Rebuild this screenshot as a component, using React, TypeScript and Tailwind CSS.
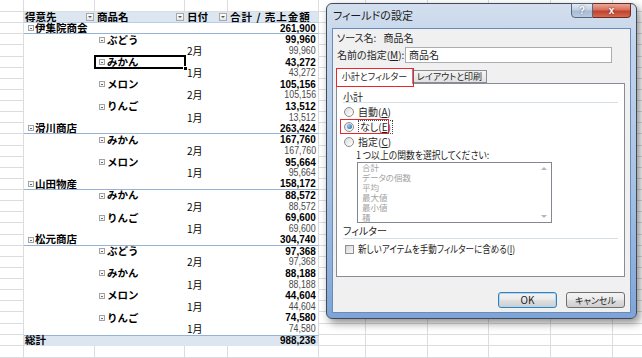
import React from "react";

type Kind = "c" | "p" | "d";
type R = { t: Kind; label: string; v: string; sel?: boolean };

const data: R[] = [
  { t: "c", label: "伊集院商会", v: "261,900" },
  { t: "p", label: "ぶどう", v: "99,960" },
  { t: "d", label: "2月", v: "99,960" },
  { t: "p", label: "みかん", v: "43,272", sel: true },
  { t: "d", label: "1月", v: "43,272" },
  { t: "p", label: "メロン", v: "105,156" },
  { t: "d", label: "2月", v: "105,156" },
  { t: "p", label: "りんご", v: "13,512" },
  { t: "d", label: "1月", v: "13,512" },
  { t: "c", label: "滑川商店", v: "263,424" },
  { t: "p", label: "みかん", v: "167,760" },
  { t: "d", label: "2月", v: "167,760" },
  { t: "p", label: "メロン", v: "95,664" },
  { t: "d", label: "1月", v: "95,664" },
  { t: "c", label: "山田物産", v: "158,172" },
  { t: "p", label: "みかん", v: "88,572" },
  { t: "d", label: "2月", v: "88,572" },
  { t: "p", label: "りんご", v: "69,600" },
  { t: "d", label: "1月", v: "69,600" },
  { t: "c", label: "松元商店", v: "304,740" },
  { t: "p", label: "ぶどう", v: "97,368" },
  { t: "d", label: "2月", v: "97,368" },
  { t: "p", label: "みかん", v: "88,188" },
  { t: "d", label: "1月", v: "88,188" },
  { t: "p", label: "メロン", v: "44,604" },
  { t: "d", label: "1月", v: "44,604" },
  { t: "p", label: "りんご", v: "74,580" },
  { t: "d", label: "1月", v: "74,580" },
];

const gridCell = "shrink-0 h-full border-r border-b border-[#dadcdd]";
const jp = "font-['Noto_Sans_CJK_JP',sans-serif]";
const num = "font-['Liberation_Sans',sans-serif]";

function Rest() {
  return (
    <>
      <div className={`${gridCell} w-[47px]`} />
      <div className={`${gridCell} w-[62px]`} />
      <div className={`${gridCell} w-[61px]`} />
      <div className={`${gridCell} w-[62px]`} />
      <div className={`${gridCell} w-[62px]`} />
      <div className={`${gridCell} w-[62px]`} />
    </>
  );
}

function GridRow({ h }: { h: string }) {
  return (
    <div className={`flex shrink-0 ${h}`}>
      <div className={`${gridCell} w-[24px]`} />
      <div className={`${gridCell} w-[71px]`} />
      <div className={`${gridCell} w-[90px]`} />
      <div className={`${gridCell} w-[43px]`} />
      <div className={`${gridCell} w-[91px]`} />
      <Rest />
    </div>
  );
}

function Minus() {
  return (
    <span className="relative inline-block shrink-0 w-[6px] h-[6px] border border-[#a3a3a3] bg-[#f7f7f7]">
      <span className="absolute left-[1px] right-[1px] top-[2px] h-px bg-[#6b6b6b]" />
    </span>
  );
}

function Drop() {
  return (
    <span className="relative inline-flex shrink-0 items-center justify-center w-[8px] h-[8px] border border-[#a9a9a9] bg-[linear-gradient(#ffffff,#e6e6e6)]">
      <span className="w-0 h-0 border-l-[2px] border-r-[2px] border-t-[2px] border-l-transparent border-r-transparent border-t-[#555]" />
    </span>
  );
}

function BoldNum({ v }: { v: string }) {
  return (
    <span className={`${num} inline-block origin-right scale-x-[0.9] text-[11px] font-bold leading-none text-black`}>
      {v}
    </span>
  );
}

function NormNum({ v }: { v: string }) {
  return (
    <span className={`${num} inline-block origin-right scale-x-[0.88] text-[10px] leading-none text-[#4a4a4a]`}>
      {v}
    </span>
  );
}

function PivotRow({ r }: { r: R }) {
  const pivotBorder = r.t === "c" ? "border-b border-b-[#95b3d7]" : "";
  return (
    <div className="flex shrink-0 h-[11.14px]">
      <div className={`${gridCell} w-[24px]`} />
      <div className={`shrink-0 w-[295px] h-full flex border-r border-[#dadcdd] ${pivotBorder}`}>
        <div className="w-[71px] h-full flex items-center pl-[4px] gap-[1px]">
          {r.t === "c" && (
            <>
              <Minus />
              <span className={`${jp} text-[10.5px] font-bold leading-none text-black`}>{r.label}</span>
            </>
          )}
        </div>
        <div className="relative w-[90px] h-full flex items-center pl-[4px] gap-[2px]">
          {r.t === "p" && (
            <>
              <Minus />
              <span className={`${jp} text-[10.5px] font-bold leading-none text-black whitespace-nowrap`}>{r.label}</span>
            </>
          )}
          {r.sel && (
            <>
              <div className="absolute -left-[1px] -right-[1px] -top-[1.5px] -bottom-[1.5px] border-2 border-black" />
              <div className="absolute -right-[3px] -bottom-[3px] w-[5px] h-[5px] bg-black border border-white" />
            </>
          )}
        </div>
        <div className="w-[43px] h-full flex items-center pl-[2px]">
          {r.t === "d" && (
            <span className={`${jp} text-[10px] leading-none text-black`}>{r.label}</span>
          )}
        </div>
        <div className="flex-1 h-full flex items-center justify-end pr-[2px]">
          {r.t === "d" ? <NormNum v={r.v} /> : <BoldNum v={r.v} />}
        </div>
      </div>
      <Rest />
    </div>
  );
}

function U({ c }: { c: string }) {
  return <span className="underline underline-offset-1">{c}</span>;
}

function Radio({ on }: { on?: boolean }) {
  return (
    <span className="relative inline-flex shrink-0 items-center justify-center w-[10px] h-[10px] rounded-full border border-[#8c8c8c] bg-[linear-gradient(135deg,#dcdcdc,#ffffff)]">
      {on && <span className="w-[5px] h-[5px] rounded-full bg-[radial-gradient(circle_at_35%_35%,#9cc8f0,#1f5fa8)]" />}
    </span>
  );
}

function Dialog() {
  const t = `${jp} [font-feature-settings:'palt'] text-[10px] leading-none text-[#1e1e1e]`;
  const ts = `${jp} [font-feature-settings:'palt'] text-[9px] leading-none text-[#1e1e1e]`;
  return (
    <div className="absolute left-[326px] top-[3px] w-[311px] h-[316px] rounded-[6px] border border-[#3e4b5c] bg-[linear-gradient(180deg,#d3dfee_0%,#c4d5ea_12%,#a9c3e3_55%,#7ea4d7_100%)] shadow-[3px_4px_8px_rgba(0,0,0,0.45)] flex flex-col">
      <div className="relative h-[24px] shrink-0 flex items-center pl-[6px] pb-[2px]">
        <span className={`${jp} [font-feature-settings:'palt'] text-[11px] leading-none text-[#1b1b1b]`}>フィールドの設定</span>
        <div className="absolute right-[5px] -top-[1px] flex">
          <div className="w-[22px] h-[15px] rounded-bl-[4px] border border-[#56667c] bg-[linear-gradient(180deg,#e3eaf3_0%,#c3d1e2_45%,#a7bbd4_55%,#b9cbe0_100%)] flex items-center justify-center">
            <span className={`${num} text-[10px] font-bold leading-none text-white [text-shadow:0_0_2px_#4a5a70]`}>?</span>
          </div>
          <div className="w-[38px] h-[15px] rounded-br-[4px] border border-[#6e2b22] border-l-0 bg-[linear-gradient(180deg,#e9a898_0%,#d7705c_45%,#c3412c_55%,#d26a52_100%)] flex items-center justify-center">
            <span className={`${num} text-[10px] font-bold leading-none text-white [text-shadow:0_0_2px_#5a1a12]`}>x</span>
          </div>
        </div>
      </div>
      <div className="mx-[5px] mb-[5px] flex-1 border border-[#6a8cbc] bg-[#f0f0f0] flex flex-col pl-[3px] pr-[5px]">
        <div className="mt-[3px] h-[12px] flex items-center pl-[1px]">
          <span className={t}>ソース名:</span>
          <span className={`${t} ml-[7px]`}>商品名</span>
        </div>
        <div className="mt-[3px] h-[16px] flex items-center pl-[1px]">
          <span className={`${t} w-[68px]`}>
            名前の指定(<U c="M" />):
          </span>
          <div className="w-[207px] h-[16px] border border-[#abadb3] bg-white flex items-center pl-[3px]">
            <span className={t}>商品名</span>
          </div>
        </div>
        <div className="relative mt-[5px] h-[15px] flex items-end">
          <div className="relative z-10 w-[77px] h-[16px] -mb-[1px] border border-b-0 border-[#898c95] bg-white flex items-center justify-center">
            <span className={ts}>小計とフィルター</span>
          </div>
          <div className="w-[74px] h-[13px] border border-l-0 border-[#898c95] bg-[linear-gradient(#f4f4f4,#e1e1e1)] flex items-center justify-center">
            <span className={ts}>レイアウトと印刷</span>
          </div>
          <div className="absolute z-20 left-0 top-0 w-[78px] h-[19px] border-[1.5px] border-[#e8262b]" />
        </div>
        <div className="h-[194px] border border-[#898c95] bg-white flex flex-col">
          <div className="mt-[7px] h-[11px] ml-[6px] flex items-center">
            <span className={t}>小計</span>
          </div>
          <div className="mx-[6px] h-px bg-[#d5dfe8]" />
          <div className="mt-[1px] h-[15px] ml-[7px] flex items-center gap-[4px]">
            <Radio />
            <span className={t}>
              自動(<U c="A" />)
            </span>
          </div>
          <div className="relative h-[15px] ml-[7px] flex items-center gap-[4px]">
            <Radio on />
            <span className={`${t} border border-dotted border-[#444] px-[1px] py-[1px]`}>
              なし(<U c="E" />)
            </span>
            <div className="absolute -left-[4px] top-[0px] w-[49px] h-[15px] border-[1.5px] border-[#e8262b]" />
          </div>
          <div className="h-[15px] ml-[7px] flex items-center gap-[4px]">
            <Radio />
            <span className={t}>
              指定(<U c="C" />)
            </span>
          </div>
          <div className="h-[12px] ml-[19px] flex items-center">
            <span className={`${t} text-[9.5px] inline-block origin-left scale-x-[0.88] whitespace-nowrap`}>1 つ以上の関数を選択してください:</span>
          </div>
          <div className="mt-[1px] ml-[20px] w-[195px] h-[61px] border border-[#828790] bg-white flex overflow-hidden">
            <div className={`flex-1 flex flex-col pl-[4px] -mt-[1px] ${jp} [font-feature-settings:'palt'] text-[8.5px] leading-[10px] text-[#a3a3a3]`}>
              <span className="h-[10px]">合計</span>
              <span className="h-[10px]">データの個数</span>
              <span className="h-[10px]">平均</span>
              <span className="h-[10px]">最大値</span>
              <span className="h-[10px]">最小値</span>
              <span className="h-[10px]">積</span>
            </div>
            <div className="w-[14px] flex flex-col items-center justify-between py-[4px]">
              <span className="w-0 h-0 border-l-[3px] border-r-[3px] border-b-[3px] border-l-transparent border-r-transparent border-b-[#b5b5b5]" />
              <span className="w-0 h-0 border-l-[3px] border-r-[3px] border-t-[3px] border-l-transparent border-r-transparent border-t-[#b5b5b5]" />
            </div>
          </div>
          <div className="mt-[2px] h-[12px] ml-[6px] flex items-center">
            <span className={t}>フィルター</span>
          </div>
          <div className="mt-[1px] mx-[6px] h-px bg-[#d5dfe8]" />
          <div className="mt-[3px] h-[14px] ml-[8px] flex items-center gap-[4px]">
            <span className="w-[9px] h-[9px] shrink-0 border border-[#8f8f8f] bg-[linear-gradient(135deg,#d6d6d6,#f7f7f7)]" />
            <span className={`${t} inline-block origin-left scale-x-[0.85] whitespace-nowrap`}>
              新しいアイテムを手動フィルターに含める(<U c="I" />)
            </span>
          </div>
        </div>
        <div className="mt-[15px] flex justify-end gap-[9px]">
          <div className="w-[59px] h-[16px] rounded-[3px] border border-[#3c7fb1] shadow-[inset_0_0_0_1px_#a8d8f5] bg-[linear-gradient(180deg,#f3f3f3_0%,#ebebeb_45%,#dddddd_55%,#cfcfcf_100%)] flex items-center justify-center">
            <span className={`${t}`}>OK</span>
          </div>
          <div className="w-[59px] h-[16px] rounded-[3px] border border-[#707070] bg-[linear-gradient(180deg,#f3f3f3_0%,#ebebeb_45%,#dddddd_55%,#cfcfcf_100%)] flex items-center justify-center">
            <span className={`${ts}`}>キャンセル</span>
          </div>
        </div>
      </div>
    </div>
  );
}

export default function App() {
  return (
    <div className="relative w-[642px] h-[358px] overflow-hidden bg-white">
      <div className="flex flex-col">
        <GridRow h="h-[12px]" />
        {/* header */}
        <div className="flex shrink-0 h-[11.14px]">
          <div className={`${gridCell} w-[24px]`} />
          <div className="shrink-0 w-[295px] h-full flex border-r border-[#dadcdd] bg-[#dce6f1] border-b border-b-[#b8cce4]">
            <div className="w-[71px] h-full flex items-center justify-between pl-[1px] pr-[1px]">
              <span className={`${jp} text-[10.5px] font-bold leading-none text-black`}>得意先</span>
              <Drop />
            </div>
            <div className="w-[90px] h-full flex items-center justify-between pl-[2px] pr-[1px]">
              <span className={`${jp} text-[10.5px] font-bold leading-none text-black`}>商品名</span>
              <Drop />
            </div>
            <div className="w-[43px] h-full flex items-center justify-between pl-[2px] pr-[1px]">
              <span className={`${jp} text-[10.5px] font-bold leading-none text-black`}>日付</span>
              <Drop />
            </div>
            <div className="flex-1 h-full flex items-center pl-[2px]">
              <span className={`${jp} text-[10.5px] font-bold leading-none text-black whitespace-nowrap tracking-[1px]`}>合計 / 売上金額</span>
            </div>
          </div>
          <Rest />
        </div>
        {data.map((r, i) => (
          <PivotRow key={i} r={r} />
        ))}
        {/* total */}
        <div className="flex shrink-0 h-[11.14px]">
          <div className={`${gridCell} w-[24px]`} />
          <div className="shrink-0 w-[295px] h-full flex border-r border-[#dadcdd] bg-[#dce6f1] border-t border-t-[#95b3d7]">
            <div className="w-[71px] h-full flex items-center pl-[1px]">
              <span className={`${jp} text-[10.5px] font-bold leading-none text-black`}>総計</span>
            </div>
            <div className="flex-1 h-full flex items-center justify-end pr-[2px]">
              <BoldNum v="988,236" />
            </div>
          </div>
          <Rest />
        </div>
        <GridRow h="h-[12px]" />
      </div>
      <Dialog />
    </div>
  );
}
